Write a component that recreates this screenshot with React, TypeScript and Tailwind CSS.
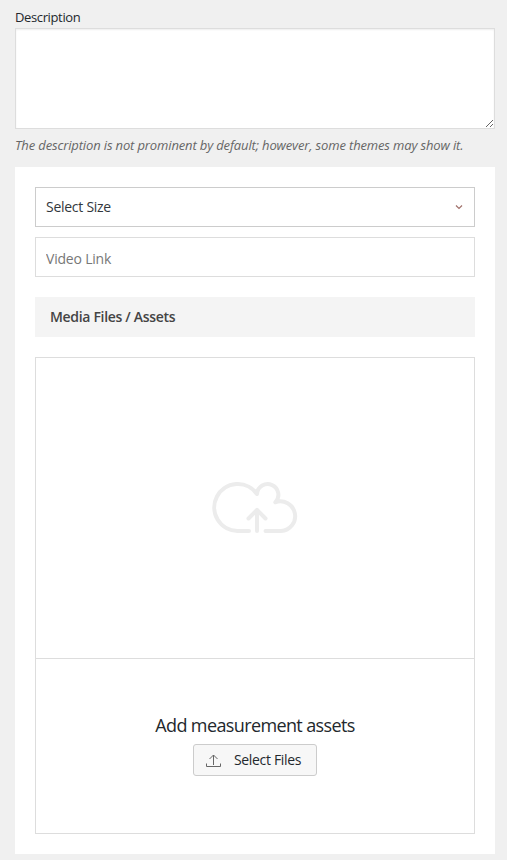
function CloudUpload() {
  return (
    <svg width="88" height="54" viewBox="211 481 88 54" fill="none" stroke="#ececec" strokeWidth="4" strokeLinecap="round" strokeLinejoin="round">
      <path d="M249 531H237.500A23.500 23.500 0 1 1 257 494A10.700 10.700 0 1 1 275.300 502.300A14.800 14.800 0 1 1 281 531H265.500" />
      <path d="M257 531V510M248.500 518.500L257 509.800L265.500 518.500" />
    </svg>
  );
}

export default function App() {
  return (
    <div className="h-[860px] w-[507px] overflow-hidden bg-[#f0f0f0] px-[15px] pr-3 pt-2 font-['Open_Sans','Noto_Sans',sans-serif] text-[13px] text-[#23282d]">
      <label htmlFor="description" className="block h-5 leading-[19px] tracking-[-0.37px]">Description</label>
      <textarea id="description" className="block h-[101px] w-full resize border border-[#ddd] bg-white shadow-[inset_0_1px_2px_rgba(0,0,0,0.07)] outline-none" />
      <p className="mt-[7px] h-[31px] whitespace-nowrap italic leading-[19px] tracking-[-0.14px] text-[#666]">
        The description is not prominent by default; however, some themes may show it.
      </p>
      <section className="h-[687px] bg-white p-5">
        <div className="flex h-10 items-center justify-between border border-[#ccc] pl-2.5 pr-[11px]">
          <span className="text-sm tracking-[-0.27px] text-[#32373c]">Select Size</span>
          <svg width="8" height="6" viewBox="0 0 8 6" fill="none" stroke="#a0706a" strokeWidth="1.2">
            <path d="M1 1.500L4 4.500L7 1.500" />
          </svg>
        </div>
        <input aria-label="Video Link" placeholder="Video Link" className="mt-2.5 block h-10 w-full border border-[#ddd] bg-white px-2.5 pt-0.5 text-sm tracking-[-0.2px] outline-none placeholder:text-[#777]" />
        <h2 className="mt-5 flex h-10 items-center bg-[#f4f4f4] px-[15px] text-sm font-semibold tracking-[-0.32px] text-[#444]">Media Files / Assets</h2>
        <div className="mt-5 h-[477px] border border-[#ddd]">
          <div className="flex h-[301px] items-center justify-center border-b border-[#ddd]">
            <CloudUpload />
          </div>
          <div className="flex h-[174px] flex-col items-center pt-[53px]">
            <h3 className="h-8 whitespace-nowrap text-[18px] leading-[26px] tracking-[-0.62px]">Add measurement assets</h3>
            <button type="button" className="flex h-8 w-[124px] items-center rounded-[3px] border border-[#ccc] bg-[#f7f7f7] pl-3 leading-[30px]">
              <svg className="mt-0.5 shrink-0" width="15" height="14" viewBox="0 0 15 14" fill="none" stroke="#666" strokeWidth="1">
                <path d="M.5 9.500V12.500H14.500V9.500M7.500 11V1M3.500 5L7.500 1L11.500 5" />
              </svg>
              <span className="ml-[13px] whitespace-nowrap text-sm tracking-[-0.34px]">Select Files</span>
            </button>
          </div>
        </div>
      </section>
    </div>
  );
}
